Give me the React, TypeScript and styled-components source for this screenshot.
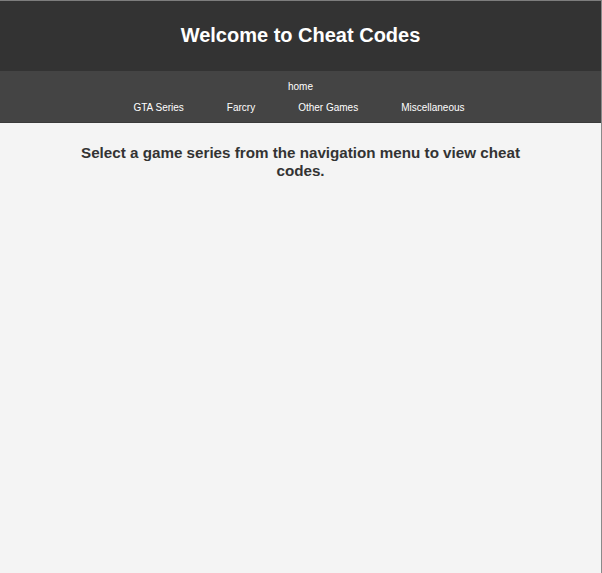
import React from "react";
import styled, { createGlobalStyle } from "styled-components";

// Page-wide reset: no body margin, Arial-width sans font
const GlobalStyle = createGlobalStyle`
  html, body {
    margin: 0;
    padding: 0;
  }
  body {
    font-family: "Liberation Sans", Arial, sans-serif;
    background: #f4f4f4;
  }
`;

const Page = styled.div`
  min-height: 100vh;
  box-sizing: border-box;
  background: #f4f4f4;
  border-top: 1px solid #7d7d7d;
  border-right: 1px solid #8a8a8a;
`;

const Header = styled.header`
  background: #333;
  padding: 23px 0 24px;
  text-align: center;
`;

const Title = styled.h1`
  margin: 0;
  font-size: 20px;
  line-height: 23px;
  font-weight: bold;
  color: #fff;
`;

const Nav = styled.nav`
  background: #444;
  padding: 9px 0 7px;
  border-bottom: 1px solid #3a3a3a;
  display: flex;
  flex-direction: column;
  align-items: center;
  gap: 7px;
`;

const NavRow = styled.ul`
  list-style: none;
  margin: 0;
  padding: 0 3px 0 0;
  display: flex;
  justify-content: center;
  gap: 43px;
`;

const NavLink = styled.a`
  display: block;
  color: #fff;
  font-size: 10px;
  line-height: 14px;
  text-decoration: none;
  cursor: pointer;
`;

const Main = styled.main`
  padding: 21px 0;
`;

const Message = styled.h2`
  max-width: 470px;
  margin: 0 auto;
  font-size: 15.2px;
  line-height: 18px;
  font-weight: bold;
  color: #333;
  text-align: center;
`;

const series = ["GTA Series", "Farcry", "Other Games", "Miscellaneous"];

const App: React.FC = () => {
  return (
    <Page>
      <GlobalStyle />
      <Header>
        <Title>Welcome to Cheat Codes</Title>
      </Header>
      <Nav>
        <NavLink>home</NavLink>
        <NavRow>
          {series.map((name) => (
            <li key={name}>
              <NavLink>{name}</NavLink>
            </li>
          ))}
        </NavRow>
      </Nav>
      <Main>
        <Message>
          Select a game series from the navigation menu to view cheat codes.
        </Message>
      </Main>
    </Page>
  );
};

export default App;
